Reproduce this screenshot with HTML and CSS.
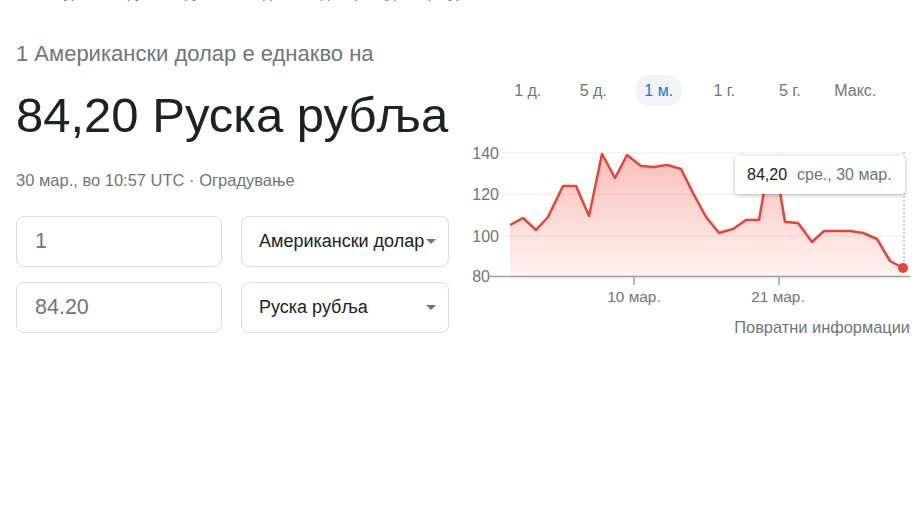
FILE: index.html
```html
<!DOCTYPE html>
<html lang="mk">
<head>
<meta charset="utf-8">
<title>Конвертор на валути</title>
<link rel="stylesheet" href="styles.css">
</head>
<body>
<div class="cut">Курсот на руската рубља во однос на доларот (денес), курсна листа</div>
<div class="main">
  <div class="left">
    <div class="equal">1 Американски долар е еднакво на</div>
    <div class="big">84,20 Руска рубља</div>
    <div class="date">30 мар., во 10:57 UTC · <span class="disc">Оградување</span></div>
    <div class="row first">
      <div class="field">1</div>
      <div class="select"><span class="sel-text">Американски долар</span><span class="caret"></span></div>
    </div>
    <div class="row">
      <div class="field">84.20</div>
      <div class="select"><span class="sel-text">Руска рубља</span><span class="caret"></span></div>
    </div>
  </div>
  <div class="right">
    <div class="tabs">
      <div class="tab"><span>1 д.</span></div>
      <div class="tab"><span>5 д.</span></div>
      <div class="tab active"><span>1 м.</span></div>
      <div class="tab"><span>1 г.</span></div>
      <div class="tab"><span>5 г.</span></div>
      <div class="tab"><span>Макс.</span></div>
    </div>
    <div class="chart">
      <svg class="chart-svg" width="445" height="170" viewBox="0 0 445 170">
        <defs>
          <linearGradient id="fillg" x1="0" y1="0" x2="0" y2="1">
            <stop offset="0" stop-color="#ea4335" stop-opacity="0.34"/>
            <stop offset="1" stop-color="#ea4335" stop-opacity="0.06"/>
          </linearGradient>
        </defs>
        <g class="grid">
          <line x1="33" y1="13" x2="436" y2="13"/>
          <line x1="33" y1="54" x2="436" y2="54"/>
          <line x1="33" y1="96" x2="436" y2="96"/>
        </g>
        <g class="ylab">
          <text x="29" y="19" text-anchor="end">140</text>
          <text x="29" y="60" text-anchor="end">120</text>
          <text x="29" y="102" text-anchor="end">100</text>
          <text x="20" y="142" text-anchor="end">80</text>
        </g>
        <polygon fill="url(#fillg)" points="40,85 53,78 66,90 78,77 93,46 106,46 119,76 132,14 145,38 157,15 171,26 184,27 197,25 211,29 223,53 236,77 249,93 263,89 276,80 289,80 296,40 308,40 315,82 328,83 342,102 354,91 367,91 380,91 393,93 407,99 420,121 433,128 433,140 40,140"/>
        <line class="axis" x1="20" y1="136.5" x2="440" y2="136.5"/>
        <line class="tick" x1="164" y1="136" x2="164" y2="145"/>
        <line class="tick" x1="309" y1="136" x2="309" y2="145"/>
        <g class="xlab">
          <text x="164" y="161.5" text-anchor="middle">10 мар.</text>
          <text x="308" y="161.5" text-anchor="middle">21 мар.</text>
        </g>
        <line class="hover" x1="434" y1="12" x2="434" y2="128"/>
        <polyline class="line" points="40,85 53,78 66,90 78,77 93,46 106,46 119,76 132,14 145,38 157,15 171,26 184,27 197,25 211,29 223,53 236,77 249,93 263,89 276,80 289,80 296,40 308,40 315,82 328,83 342,102 354,91 367,91 380,91 393,93 407,99 420,121 433,128"/>
        <circle cx="433" cy="128" r="5" fill="#ea4335"/>
      </svg>
      <div class="tooltip"><span class="tt-val">84,20</span><span class="tt-date">сре., 30 мар.</span></div>
    </div>
    <div class="feedback">Повратни информации</div>
  </div>
</div>
</body>
</html>
```

FILE: styles.css
```css
html, body {
  margin: 0;
  padding: 0;
  background: #fff;
}
body {
  font-family: "Liberation Sans", Arial, sans-serif;
  color: #202124;
  overflow: hidden;
  height: 514px;
}
.cut {
  margin-top: -16px;
  height: 18px;
  line-height: 18px;
  font-size: 15px;
  color: #70757a;
  padding-left: 55px;
  white-space: nowrap;
}
.main {
  display: flex;
  padding-left: 16px;
}
.left {
  width: 434px;
  flex: none;
}
.equal {
  margin-top: 38px;
  font-size: 22px;
  line-height: 28px;
  color: #70757a;
  white-space: nowrap;
}
.big {
  margin-top: 19px;
  font-size: 49px;
  line-height: 56px;
  color: #202124;
  white-space: nowrap;
}
.date {
  margin-top: 27px;
  font-size: 16.5px;
  line-height: 20px;
  color: #70757a;
  white-space: nowrap;
}
.row {
  display: flex;
  gap: 19px;
  margin-top: 15px;
}
.row.first {
  margin-top: 26px;
}
.field {
  box-sizing: border-box;
  width: 206px;
  height: 51px;
  border: 1px solid #dadce0;
  border-radius: 8px;
  padding-left: 18px;
  display: flex;
  align-items: center;
  font-size: 21.5px;
  color: #70757a;
}
.select {
  box-sizing: border-box;
  width: 208px;
  height: 51px;
  border: 1px solid #dadce0;
  border-radius: 8px;
  padding: 0 12px 0 17px;
  display: flex;
  align-items: center;
  justify-content: space-between;
  font-size: 18px;
  color: #202124;
}
.sel-text {
  white-space: nowrap;
}
.caret {
  width: 0;
  height: 0;
  border-left: 5px solid transparent;
  border-right: 5px solid transparent;
  border-top: 5px solid #70757a;
  flex: none;
}
.right {
  margin-left: 20px;
  width: 445px;
  flex: none;
}
.tabs {
  margin-top: 73px;
  margin-left: 25px;
  width: 393px;
  display: grid;
  grid-template-columns: repeat(6, 1fr);
}
.tab {
  display: flex;
  justify-content: center;
}
.tab span {
  display: block;
  height: 31px;
  line-height: 31px;
  padding: 0 9px;
  border-radius: 16px;
  font-size: 16px;
  color: #70757a;
  white-space: nowrap;
}
.tab.active span {
  background: #f1f3f4;
  color: #1a73e8;
}
.chart {
  position: relative;
  margin-top: 34px;
  height: 170px;
}
.chart-svg {
  display: block;
}
.grid line {
  stroke: #ececec;
  stroke-width: 1;
}
.ylab text {
  font-family: "Liberation Sans", Arial, sans-serif;
  font-size: 16px;
  fill: #70757a;
}
.xlab text {
  font-family: "Liberation Sans", Arial, sans-serif;
  font-size: 15.4px;
  fill: #70757a;
}
.axis {
  stroke: #9aa0a6;
  stroke-width: 1.5;
}
.tick {
  stroke: #9aa0a6;
  stroke-width: 1.5;
}
.hover {
  stroke: #9aa0a6;
  stroke-width: 1;
  stroke-dasharray: 2 2;
}
.line {
  fill: none;
  stroke: #ea4335;
  stroke-width: 2.5;
  stroke-linejoin: round;
}
.tooltip {
  position: absolute;
  left: 265px;
  top: 16px;
  width: 170px;
  height: 38px;
  box-sizing: border-box;
  background: #fff;
  border-radius: 3px;
  box-shadow: 0 1px 4px rgba(0, 0, 0, 0.28);
  display: flex;
  align-items: center;
  padding-left: 12px;
  white-space: nowrap;
}
.tt-val {
  font-size: 16px;
  color: #202124;
  margin-right: 10px;
}
.tt-date {
  font-size: 16px;
  color: #70757a;
}
.feedback {
  margin-top: 6px;
  text-align: right;
  padding-right: 5px;
  font-size: 16.4px;
  line-height: 22px;
  color: #70757a;
}
```
